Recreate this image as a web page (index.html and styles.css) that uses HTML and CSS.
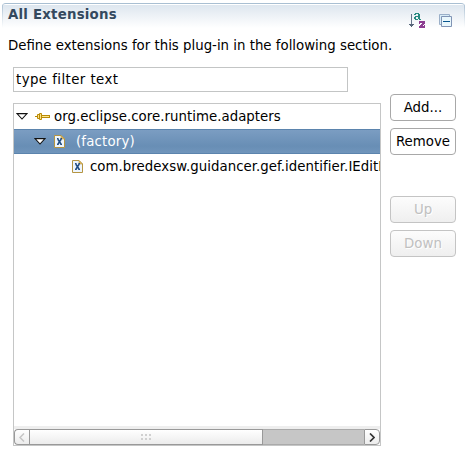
FILE: index.html
```html
<!DOCTYPE html>
<html lang="en">
<head>
<meta charset="utf-8">
<title>All Extensions</title>
<link rel="stylesheet" href="styles.css">
</head>
<body>
<section class="section">
  <header class="title-bar">
    <h1 class="title">All Extensions</h1>
    <svg class="tool sort" width="17" height="17" viewBox="0 0 17 17" shape-rendering="crispEdges">
      <path d="M2 1h1v12H2z" fill="#65758a"/>
      <path d="M0 11h5v1H0zM1 12h3v1H1zM2 13h1v1H2z" fill="#56667a"/>
      <path d="M6 0h4v1H6zM5 1h2v1H5zM9 1h2v5H9zM6 3h3v1H6zM5 4h2v2H5zM6 6h3v1H6zM10 6h2v1h-2z" fill="#278a80"/>
      <path d="M10 8h6v2h-6zM10 10h1v1h-1zM13 10h3v1h-3zM12 11h3v1h-3zM11 12h3v1h-3zM15 12h1v1h-1zM10 13h6v2h-6z" fill="#8d3d91"/>
    </svg>
    <svg class="tool" width="13" height="13" viewBox="0 0 13 13">
      <path d="M.5 .5h10v10H.5z" fill="#d8ecf7" stroke="#9aafc8"/>
      <path d="M2.5 2.5h10v10h-10z" fill="#e9f7fc" stroke="#8094b5"/>
      <path d="M4 7h7v1H4z" fill="#07558f"/>
    </svg>
  </header>
  <p class="description">Define extensions for this plug-in in the following section.</p>
  <div class="filter">type filter text</div>
  <div class="content">
    <div class="tree">
      <div class="row level-0">
        <svg class="arrow" width="12" height="7" viewBox="0 0 12 7"><path d="M1 .6h10L6 6z" fill="#fff" stroke="#111" stroke-width="1.1"/></svg>
        <svg class="point" width="15" height="7" viewBox="0 0 15 7">
          <path d="M0 3h3v1H0zM6 2h9v3H6z" fill="#b98a08"/>
          <path d="M7 3h7v1H7z" fill="#ffe88a"/>
          <path d="M2.500 1.500h2v4h-2zM4.500 .5h2v6h-2z" fill="#ffe486" stroke="#b98a08"/>
        </svg>
        <span class="label-point">org.eclipse.core.runtime.adapters</span>
      </div>
      <div class="row level-1 selected">
        <svg class="arrow" width="12" height="7" viewBox="0 0 12 7"><path d="M1 .6h10L6 6z" fill="#fff" stroke="#111" stroke-width="1.1"/></svg>
        <svg class="file" width="11" height="13" viewBox="0 0 11 13">
          <path d="M.5 .5h6.500l3.500 3.500v8.500H.5z" fill="#edf5fd" stroke="#b59542"/>
          <path d="M7 .5v3.500h3.500z" fill="#e6bd62" stroke="#b59542" stroke-width=".6"/>
          <path d="M3.700 4l3.600 5.500M7.300 4l-3.600 5.500" stroke="#204d83" stroke-width="1.500"/>
          <path d="M3 3.500h1.500M6.500 3.500h1.500M3 9.500h1.500M6.500 9.500h1.500" stroke="#204d83"/>
        </svg>
        <span class="label-factory">(factory)</span>
      </div>
      <div class="row level-2">
        <svg class="file" width="11" height="13" viewBox="0 0 11 13">
          <path d="M.5 .5h6.500l3.500 3.500v8.500H.5z" fill="#edf5fd" stroke="#b59542"/>
          <path d="M7 .5v3.500h3.500z" fill="#e6bd62" stroke="#b59542" stroke-width=".6"/>
          <path d="M3.700 4l3.600 5.500M7.300 4l-3.600 5.500" stroke="#204d83" stroke-width="1.500"/>
          <path d="M3 3.500h1.500M6.500 3.500h1.500M3 9.500h1.500M6.500 9.500h1.500" stroke="#204d83"/>
        </svg>
        <span class="label-class">com.bredexsw.guidancer.gef.identifier.IEditP</span>
      </div>
      <div class="scrollbar">
        <div class="step left"><svg width="6" height="9" viewBox="0 0 6 9"><path d="M5 .5l-4 4 4 4" fill="none" stroke="#c5c5c5" stroke-width="1.500"/></svg></div>
        <div class="thumb"><svg width="11" height="7" viewBox="0 0 11 7" shape-rendering="crispEdges"><path d="M0 0h2v2H0zM4 0h2v2H4zM8 0h2v2H8zM0 4h2v2H0zM4 4h2v2H4zM8 4h2v2H8z" fill="#d0d0d0"/></svg></div>
        <div class="trough"></div>
        <div class="step right"><svg width="6" height="9" viewBox="0 0 6 9"><path d="M1 .5l4 4-4 4" fill="none" stroke="#333" stroke-width="1.700"/></svg></div>
      </div>
    </div>
    <div class="buttons">
      <button class="button">Add...</button>
      <button class="button remove">Remove</button>
      <button class="button up" disabled>Up</button>
      <button class="button" disabled>Down</button>
    </div>
  </div>
</section>
</body>
</html>
```
FILE: styles.css
```css
* { box-sizing: border-box; }
body {
  margin: 0;
  background: #fff;
  color: #000;
  font: 13.333px/16px "DejaVu Sans", sans-serif;
  overflow: hidden;
}
svg { display: block; flex: none; }
.section { width: 463px; margin: 3px 0 0 2px; }
.title-bar {
  display: flex;
  align-items: flex-start;
  height: 25px;
  padding-left: 6px;
  padding-right: 13px;
  border-top: 1px solid #a9bfd2;
  border-radius: 4px 4px 0 0;
  background:
    linear-gradient(#a9bfd2, #fff) left / 1px 100% no-repeat,
    linear-gradient(#a9bfd2, #fff) right / 1px 100% no-repeat,
    linear-gradient(#fff, #fff) top / 100% 1px no-repeat,
    linear-gradient(#dce5ee, #fff);
}
.title {
  flex: 1;
  margin: 3px 0 0;
  color: #34495e;
  font-size: 13.333px;
  line-height: 16px;
  letter-spacing: .22px;
}
.sort { margin: 9px 13px 0 0; }
.tool + .tool { margin-top: 10px; }
.description { margin: 10px 0 0 6px; height: 16px; white-space: nowrap; }
.filter {
  width: 335px;
  height: 25px;
  margin: 13px 0 0 11px;
  padding: 4px 2px;
  border: 1px solid #c3c5c5;
  letter-spacing: .43px;
}
.content { display: flex; margin: 11px 0 0 11px; }
.tree {
  display: flex;
  flex-direction: column;
  width: 368px;
  height: 343px;
  border: 1px solid #c5c6c6;
  overflow: hidden;
}
.row {
  display: flex;
  align-items: center;
  height: 25px;
  white-space: nowrap;
  flex: none;
}
.level-0 { padding-left: 2px; }
.level-0 .arrow { margin-right: 7px; }
.point { margin-right: 4px; }
.label-point { letter-spacing: .03px; }
.level-1 { padding-left: 20px; }
.level-1 .arrow { margin-right: 8px; }
.level-1 .file { margin-right: 11px; }
.label-factory { letter-spacing: .17px; }
.level-2 { padding-left: 58px; }
.level-2 .file { margin-right: 7px; }
.label-class { letter-spacing: .04px; }
.selected {
  color: #fff;
  border-top: 1px solid #5b84ad;
  border-bottom: 1px solid #5b84ad;
  background: linear-gradient(#7b9dc2, #688eb5 70%, #7095bb);
}
.scrollbar {
  display: flex;
  height: 19px;
  margin-top: auto;
  border-top: 3px solid #eee;
}
.step, .thumb {
  display: flex;
  align-items: center;
  justify-content: center;
  height: 16px;
  border: 1px solid #999;
  background: linear-gradient(#fff, #ececec);
}
.step { width: 16px; }
.left { width: 15px; border-right: 0; border-radius: 4px 0 0 4px; }
.right { border-radius: 0 4px 4px 0; }
.thumb { width: 234px; }
.trough {
  flex: 1;
  height: 16px;
  border-top: 1px solid #aaa;
  border-bottom: 1px solid #aaa;
  background: #c6c6c6;
}
.buttons { margin: -9px 0 0 9px; width: 66px; }
.button {
  display: block;
  width: 66px;
  height: 27px;
  margin: 0 0 7px;
  padding: 0;
  border: 1px solid #a8a8a8;
  border-radius: 4px;
  background: #fff;
  color: #000;
  font: inherit;
  text-align: center;
}
.button.up { margin-top: 41px; }
.button:disabled {
  border-color: #c4c4c4;
  background: linear-gradient(#fcfcfc, #efefef);
  color: #c0c0c0;
  text-shadow: 1px 1px #fff;
}
```
